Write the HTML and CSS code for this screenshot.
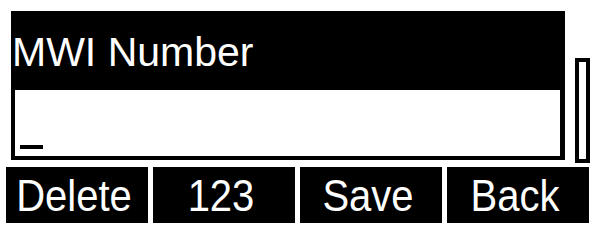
FILE: index.html
```html
<!DOCTYPE html>
<html lang="en">
    <head>
       <link rel="stylesheet" href="styles.css">
        <meta name="viewport" content="width=device-width, initial-scale=1" charset="utf-8">
        <title>MWI Number</title>
    </head>
    <body>

    <div class="screen">
      <div class="screen__top">
        <div class="screen__main">
          <div class="title">MWI Number</div>
          <div class="input">
            <span class="input__cursor"></span>
          </div>
        </div>
        <div class="scrollbar"></div>
      </div>

      <div class="softkeys">
        <div class="softkey"><span class="softkey__label">Delete</span></div>
        <div class="softkey"><span class="softkey__label">123</span></div>
        <div class="softkey"><span class="softkey__label">Save</span></div>
        <div class="softkey"><span class="softkey__label">Back</span></div>
      </div>
    </div>

    </body>
</html>
```

FILE: styles.css
```css
html {
   box-sizing: border-box;
   background: white;
}

*,
*:before,
*:after {
   box-sizing: inherit;
}

body {
   margin: 0;
   font-family: "Liberation Sans", Arial, sans-serif;
   color: black;
}

.screen {
   width: 595px;
   height: 226px;
   padding-top: 11px;
}

.screen__top {
   display: flex;
   align-items: flex-start;
   gap: 10px;
   padding-left: 11px;
}

.screen__main {
   width: 554px;
   display: flex;
   flex-direction: column;
}

.title {
   height: 79px;
   background: black;
   color: white;
   font-size: 41px;
   line-height: 41px;
   padding: 21px 0 0 1px;
}

.input {
   height: 70px;
   border: 4px solid black;
   border-top: 0;
   border-right-width: 5px;
   display: flex;
   align-items: flex-end;
   padding: 0 0 7px 5px;
}

.input__cursor {
   display: block;
   width: 23px;
   height: 4px;
   background: black;
}

.scrollbar {
   width: 15px;
   height: 105px;
   margin-top: 47px;
   border: 4px solid black;
   background: white;
}

.softkeys {
   display: flex;
   gap: 5px;
   padding-left: 6px;
   margin-top: 4px;
}

.softkey {
   width: 142px;
   height: 56px;
   background: black;
   color: white;
   font-size: 40px;
   line-height: 50px;
   padding: 6px 6px 0 0;
   text-align: center;
}

.softkey__label {
   display: inline-block;
   transform: scaleY(1.1);
   transform-origin: center bottom;
}
```
